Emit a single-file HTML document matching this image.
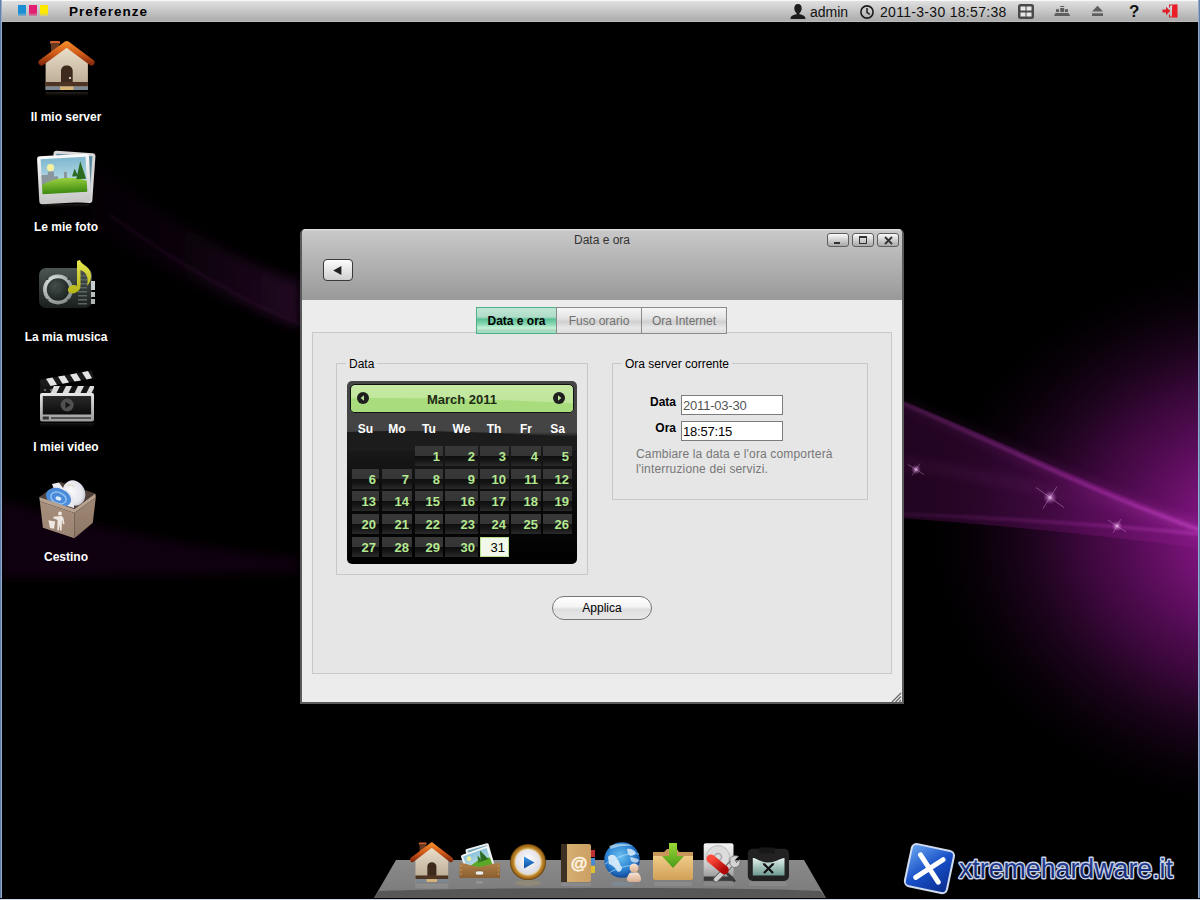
<!DOCTYPE html>
<html><head><meta charset="utf-8">
<style>
*{margin:0;padding:0;box-sizing:border-box}
html,body{width:1200px;height:900px;overflow:hidden;background:#000;font-family:"Liberation Sans",sans-serif}
.abs{position:absolute}
#bg{left:0;top:0;width:1200px;height:900px}
#topbar{left:0;top:0;width:1200px;height:22px;background:linear-gradient(#f8f8f8 0,#f8f8f8 1px,#e0e0e0 1px,#acacac 21px,#bcbcbc 21px,#bcbcbc 22px)}
.lbl{color:#fff;font-weight:bold;font-size:12px;text-align:center;width:132px;left:0}
#win{left:300px;top:229px;width:604px;height:475px;background:#ececec;border:2px solid #5a5a5a;border-top:none;border-radius:5px 5px 0 0}
#whead{background:linear-gradient(#dcdcdc 0,#dcdcdc 1px,#c8c8c8 2px,#999 71px);border-radius:5px 5px 0 0}
.tbtn{top:4px;width:22px;height:14px;border:1px solid #5e5e5e;border-radius:3px;background:linear-gradient(#fafafa,#d8d8d8 40%,#a8a8a8)}
.tab{top:307px;height:27px;border:1px solid #8a8a8a;font-size:12px;text-align:center;line-height:27px;color:#707070;background:linear-gradient(#f6f6f6 0,#e4e4e4 40%,#d0d0d0 55%,#e8e8e8 80%,#dcdcdc 100%)}
.fs{border:1px solid #c8c8c8}
.legend{font-size:12px;color:#000;background:#e6e6e6;padding:0 3px}
.wd{top:422px;font-size:12px;font-weight:bold;color:#fff;text-align:center;line-height:14px}
.cell{height:20px;font-size:13px;font-weight:bold;color:#b4e890;text-align:right;padding-right:3px;line-height:22px;background:linear-gradient(#383838 0,#353535 50%,#0e0e0e 50%,#151515 70%,#2a2a2a 100%)}
.cell.sel{background:#f2f9ea;border:1px solid #b6e08e;color:#000;font-weight:normal;line-height:20px;padding-right:3px}
</style></head><body>
<svg id="bg" class="abs" width="1200" height="900" viewBox="0 0 1200 900">
<defs>
<radialGradient id="g1" cx=".5" cy=".5" r=".5">
<stop offset="0" stop-color="#a020a0" stop-opacity="1"/>
<stop offset=".25" stop-color="#801480" stop-opacity=".95"/>
<stop offset=".55" stop-color="#4e0a4e" stop-opacity=".75"/>
<stop offset=".8" stop-color="#1c041c" stop-opacity=".45"/>
<stop offset="1" stop-color="#000" stop-opacity="0"/>
</radialGradient>
<linearGradient id="st1" x1="900" y1="0" x2="1200" y2="0" gradientUnits="userSpaceOnUse">
<stop offset="0" stop-color="#a040a0" stop-opacity=".25"/>
<stop offset=".6" stop-color="#b030b0" stop-opacity=".6"/>
<stop offset="1" stop-color="#c040c0" stop-opacity=".85"/>
</linearGradient>
<linearGradient id="lg1" x1="0" y1="0" x2="1" y2="0">
<stop offset="0" stop-color="#300830" stop-opacity="0"/>
<stop offset="1" stop-color="#401040" stop-opacity=".8"/>
</linearGradient>
<filter id="b6" filterUnits="userSpaceOnUse" x="0" y="0" width="1200" height="900"><feGaussianBlur stdDeviation="6"/></filter>
<filter id="b2" filterUnits="userSpaceOnUse" x="0" y="0" width="1200" height="900"><feGaussianBlur stdDeviation="1.5"/></filter>
<filter id="b2s" x="-50%" y="-50%" width="200%" height="200%"><feGaussianBlur stdDeviation=".6"/></filter>
<filter id="b20" filterUnits="userSpaceOnUse" x="0" y="0" width="1200" height="900"><feGaussianBlur stdDeviation="20"/></filter>
</defs>
<rect width="1200" height="900" fill="#000"/>
<ellipse cx="1285" cy="535" rx="370" ry="290" fill="url(#g1)"/>
<linearGradient id="bandg" x1="900" y1="0" x2="1200" y2="0" gradientUnits="userSpaceOnUse"><stop offset="0" stop-color="#5a0c5a" stop-opacity=".6"/><stop offset=".5" stop-color="#6a106a" stop-opacity=".65"/><stop offset="1" stop-color="#8a1a8a" stop-opacity=".8"/></linearGradient>
<path d="M900 400 C1000 440 1100 490 1200 525 L1200 548 C1100 535 1000 525 900 518Z" fill="url(#bandg)" opacity=".6"/>
<path d="M900 462 C1000 478 1100 500 1200 528" stroke="#a040a0" stroke-width="6" fill="none" opacity=".18" filter="url(#b6)"/>
<path d="M900 402 C1000 445 1100 495 1200 530" stroke="url(#st1)" stroke-width="10" fill="none" opacity=".35" filter="url(#b6)"/>
<path d="M900 402 C1000 445 1100 495 1200 530" stroke="url(#st1)" stroke-width="3" fill="none" filter="url(#b2)"/>
<path d="M900 514 C1000 518 1100 524 1200 534" stroke="url(#st1)" stroke-width="2.5" fill="none" filter="url(#b2)" opacity=".7"/>
<linearGradient id="lgl" x1="40" y1="0" x2="300" y2="0" gradientUnits="userSpaceOnUse"><stop offset="0" stop-color="#300830" stop-opacity="0"/><stop offset=".5" stop-color="#300a30" stop-opacity=".5"/><stop offset="1" stop-color="#601a60" stop-opacity=".9"/></linearGradient>
<path d="M40 120 C120 190 220 255 300 282 L300 328 C220 300 130 250 40 200Z" fill="url(#lgl)" opacity=".4" filter="url(#b6)"/>
<path d="M110 215 C180 265 240 300 300 324" stroke="#702070" stroke-width="2" fill="none" opacity=".22" filter="url(#b2)"/>
<path d="M0 500 C100 530 200 550 300 558 L300 572 C200 574 100 576 0 578Z" fill="#1e041e" opacity=".55" filter="url(#b6)"/>
<g>
<radialGradient id="spk" cx=".5" cy=".5" r=".5"><stop offset="0" stop-color="#ffd8ff" stop-opacity=".95"/><stop offset=".35" stop-color="#e0a0e0" stop-opacity=".5"/><stop offset="1" stop-color="#c060c0" stop-opacity="0"/></radialGradient>
<g transform="translate(916 469.5)"><circle r="5" fill="url(#spk)"/><path d="M-8 -5L8 5M-4 6L4 -6" stroke="#f0c0f0" stroke-width=".7" opacity=".45"/></g>
<g transform="translate(1050 497.5)"><circle r="7" fill="url(#spk)"/><path d="M-14 -10L14 10M-7 11L7 -11" stroke="#f0c0f0" stroke-width=".8" opacity=".45"/></g>
<g transform="translate(1117 526)"><circle r="5.5" fill="url(#spk)"/><path d="M-9 -6L9 6M-4 7L4 -7" stroke="#f0c0f0" stroke-width=".7" opacity=".45"/></g>
</g>
</svg>

<div id="topbar" class="abs"></div>
<div class="abs" style="left:0;top:0;width:2px;height:900px;background:linear-gradient(90deg,#4d6890,#a9c3e6)"></div>
<div class="abs" style="left:1198px;top:0;width:2px;height:900px;background:linear-gradient(90deg,#a9c3e6,#4d6890)"></div>
<div class="abs" style="left:0;top:899px;width:1200px;height:1px;background:#cfd8e6"></div>
<div class="abs" style="left:18px;top:5px;width:8px;height:11px;background:linear-gradient(#1a8fd6 0,#1a8fd6 70%,rgba(26,143,214,.3) 100%)"></div>
<div class="abs" style="left:29px;top:5px;width:8px;height:11px;background:linear-gradient(#e21f72 0,#e21f72 70%,rgba(226,31,114,.3) 100%)"></div>
<div class="abs" style="left:40px;top:5px;width:8px;height:11px;background:linear-gradient(#fde800 0,#fde800 70%,rgba(253,232,0,.3) 100%)"></div>
<div class="abs" style="left:69px;top:4px;font-size:13.5px;font-weight:bold;letter-spacing:1px;line-height:16px;color:#000">Preferenze</div>
<svg class="abs" style="left:790px;top:4px" width="16" height="15" viewBox="0 0 16 15"><path d="M8 0C5.5 0 4.3 1.8 4.3 4.2C4.3 6.5 5.5 8.4 6.6 9.2L6.6 10.2C3.2 10.8 0.5 12 0.5 15H15.5C15.5 12 12.8 10.8 9.4 10.2V9.2C10.5 8.4 11.7 6.5 11.7 4.2C11.7 1.8 10.5 0 8 0Z" fill="#1c1c1c"/></svg>
<div class="abs" style="left:810px;top:4px;font-size:14px;line-height:16px;color:#111">admin</div>
<svg class="abs" style="left:860px;top:5px" width="14" height="14" viewBox="0 0 14 14"><circle cx="7" cy="7" r="6.1" fill="none" stroke="#1c1c1c" stroke-width="1.6"/><path d="M7 3V7.3L9.8 9.5" fill="none" stroke="#1c1c1c" stroke-width="1.5"/></svg>
<div class="abs" style="left:880px;top:4px;font-size:14px;line-height:16px;color:#111;letter-spacing:.3px">2011-3-30 18:57:38</div>
<svg class="abs" style="left:1018px;top:4px" width="16" height="15" viewBox="0 0 16 15"><rect x="0" y="0" width="16" height="15" rx="2.5" fill="#4a4a4a"/><rect x="2.5" y="2.5" width="5" height="4" fill="#e8e8e8"/><rect x="8.5" y="2.5" width="5" height="4" fill="#e8e8e8"/><rect x="2.5" y="8.5" width="5" height="4" fill="#e8e8e8"/><rect x="8.5" y="8.5" width="5" height="4" fill="#e8e8e8"/></svg>
<svg class="abs" style="left:1053px;top:5px" width="18" height="12" viewBox="0 0 18 12"><rect x="7.2" y="1" width="4" height="1" fill="#5e5e5e"/><rect x="7.2" y="3" width="4" height="4" fill="#5e5e5e"/><rect x="3" y="4.2" width="3" height="2.8" fill="#5e5e5e"/><rect x="12" y="4.2" width="3" height="2.8" fill="#5e5e5e"/><path d="M2.5 8H15.5L17.2 11H1Z" fill="#5e5e5e"/></svg>
<svg class="abs" style="left:1091px;top:5px" width="13" height="12" viewBox="0 0 13 12"><path d="M6.5 0.7L12 6.6H1Z" fill="#5e5e5e"/><rect x="1" y="8.3" width="11" height="2.7" fill="#5e5e5e"/></svg>
<div class="abs" style="left:1129px;top:2px;font-size:17px;font-weight:bold;line-height:20px;color:#111">?</div>
<svg class="abs" style="left:1162px;top:4px" width="16" height="14" viewBox="0 0 16 14"><path d="M7 0.5H15.5V13.5H7V10.5H8V12.5H10L10.5 1.5H8V3.5H7Z" fill="#d9202a"/><path d="M10.5 1.5L15 0.5V13.5L10 12.5Z" fill="#ee1c25"/><path d="M0.5 5.5H4V2.8L8.3 7L4 11.2V8.5H0.5Z" fill="#e01e28"/></svg>



<svg class="abs" style="left:36px;top:38px" width="62" height="62" viewBox="0 0 62 62">
<defs>
<linearGradient id="hroof" gradientUnits="userSpaceOnUse" x1="0" y1="3" x2="0" y2="28"><stop offset="0" stop-color="#f8902e"/><stop offset=".5" stop-color="#d05a18"/><stop offset="1" stop-color="#7a220a"/></linearGradient>
<linearGradient id="hbody" x1="0" y1="0" x2="0" y2="1"><stop offset="0" stop-color="#efe4d0"/><stop offset="1" stop-color="#b4a48c"/></linearGradient>
<linearGradient id="hrefl" x1="0" y1="0" x2="0" y2="1"><stop offset="0" stop-color="#3a3028" stop-opacity=".7"/><stop offset="1" stop-color="#000" stop-opacity="0"/></linearGradient>
</defs>
<rect x="14" y="3" width="10" height="3" rx="1" fill="#d0602a"/>
<rect x="15" y="5" width="8" height="9" fill="#6a3a20"/>
<path d="M9.6 22 L30.7 6 L51.9 22 L51.9 52 L9.6 52Z" fill="url(#hbody)"/>
<path d="M5.5 24.5 L30.7 6 L55.5 24.5" stroke="url(#hroof)" stroke-width="6" stroke-linecap="round" stroke-linejoin="round" fill="none"/>
<path d="M25 48V33C25 29.5 27.5 27.5 30.8 27.5C34 27.5 36.7 29.5 36.7 33V48Z" fill="#3e2a1c"/>
<circle cx="34" cy="40" r="1" fill="#fff"/>
<rect x="9.6" y="44" width="42.3" height="4.5" fill="#4e3422"/>
<rect x="9.6" y="48.5" width="42.3" height="3.5" rx="1" fill="#7c8894"/>
<rect x="24" y="48.5" width="13.5" height="3.5" fill="#d8b478"/>
<rect x="9.6" y="54" width="42.3" height="6" fill="url(#hrefl)"/>
</svg>

<svg class="abs" style="left:34px;top:146px" width="64" height="64" viewBox="0 0 64 64">
<defs>
<linearGradient id="pfr" x1="0" y1="0" x2="0" y2="1"><stop offset="0" stop-color="#fafafa"/><stop offset="1" stop-color="#c6c6c6"/></linearGradient>
<linearGradient id="psky" x1="0" y1="0" x2="0" y2="1"><stop offset="0" stop-color="#7fb8d0"/><stop offset="1" stop-color="#d4ecf0"/></linearGradient>
<linearGradient id="pgr" x1="0" y1="0" x2="0" y2="1"><stop offset="0" stop-color="#9ad040"/><stop offset="1" stop-color="#3e8a10"/></linearGradient>
</defs>
<g transform="rotate(4 40 30)"><rect x="18" y="6" width="42" height="50" rx="3" fill="#d8d8d8"/><rect x="21" y="9" width="36" height="38" fill="#5a8aa0"/></g>
<g transform="rotate(-3 30 30)">
<rect x="4" y="9" width="52" height="48" rx="3" fill="url(#pfr)"/>
<rect x="7.5" y="12" width="45" height="35" fill="url(#psky)"/>
<circle cx="17" cy="21" r="3.6" fill="#f4f0a0"/>
<path d="M7.5 28H14V25H20V30H24V34H30V26H33V36L7.5 40Z" fill="#8a969c"/>
<path d="M7.5 47V38C18 32 36 29 52.5 36V47Z" fill="url(#pgr)"/>
<path d="M47 16L52 34H42Z" fill="#2c6a20"/>
<path d="M41 23L44 31H38Z" fill="#2c6a20"/>
</g>
<rect x="9" y="58" width="46" height="5" fill="url(#hrefl)" opacity=".8"/>
</svg>

<svg class="abs" style="left:36px;top:256px" width="62" height="62" viewBox="0 0 62 62">
<defs>
<linearGradient id="mbody" x1="0" y1="0" x2="0" y2="1"><stop offset="0" stop-color="#4c5652"/><stop offset="1" stop-color="#1a1f1d"/></linearGradient>
<radialGradient id="mspk" cx=".4" cy=".35" r=".7"><stop offset="0" stop-color="#44504c"/><stop offset="1" stop-color="#1a201e"/></radialGradient>
<linearGradient id="mnote" x1="0" y1="0" x2="0" y2="1"><stop offset="0" stop-color="#e8e850"/><stop offset="1" stop-color="#b4b418"/></linearGradient>
</defs>
<rect x="3" y="12" width="53" height="40" rx="7" fill="url(#mbody)"/>
<radialGradient id="mring" cx=".35" cy=".3" r=".8"><stop offset="0" stop-color="#e8eeee"/><stop offset="1" stop-color="#7a8482"/></radialGradient><circle cx="22" cy="33.5" r="15" fill="url(#mring)"/>
<circle cx="22" cy="33.5" r="11.2" fill="url(#mspk)"/><circle cx="11.5" cy="23" r="1" fill="#333"/><circle cx="32.5" cy="23" r="1" fill="#333"/><circle cx="11.5" cy="44" r="1" fill="#333"/><circle cx="32.5" cy="44" r="1" fill="#333"/>
<circle cx="22" cy="33.5" r="3" fill="#38423e"/>
<g fill="#5a6662"><rect x="42" y="19" width="9" height="1.5"/><rect x="42" y="23" width="9" height="1.5"/><rect x="42" y="27" width="9" height="1.5"/><rect x="42" y="31" width="9" height="1.5"/><rect x="42" y="35" width="9" height="1.5"/><rect x="42" y="39" width="9" height="1.5"/><rect x="42" y="43" width="9" height="1.5"/><rect x="42" y="47" width="9" height="1.5"/></g>
<rect x="55" y="25" width="4" height="9" fill="#c8d0ce"/><rect x="55" y="36" width="4" height="5" fill="#b8c0be"/><rect x="55" y="43" width="4" height="5" fill="#b0b8b6"/>
<path d="M41 5L41 30C38.5 28 33 29 32 33C31 37 36 38.5 40 36.5C43 35 44.5 33 44.5 29.5V14C50 16 53 21 51 30C56 25 57 16 51 11C47 8 45 7 44 4Z" fill="url(#mnote)"/>
</svg>

<svg class="abs" style="left:36px;top:366px" width="62" height="64" viewBox="0 0 62 64">
<defs>
<linearGradient id="vfr" x1="0" y1="0" x2="0" y2="1"><stop offset="0" stop-color="#e8e8e8"/><stop offset="1" stop-color="#9a9a9a"/></linearGradient>
<linearGradient id="vscr" x1="0" y1="0" x2="0" y2="1"><stop offset="0" stop-color="#2a2a2a"/><stop offset="1" stop-color="#0c0c0c"/></linearGradient>
</defs>
<path d="M3.5 14L56 4.5L57.5 12L5 21.5Z" fill="#1a1a1a"/>
<g fill="#e4e4e4"><path d="M10 12.8L16.5 11.6L21 18.8L14.5 20Z"/><path d="M22 10.6L28.5 9.4L33 16.6L26.5 17.8Z"/><path d="M34 8.4L40.5 7.2L45 14.4L38.5 15.6Z"/><path d="M46 6.2L52 5L56 12.2L50.5 13.4Z"/></g>
<rect x="4" y="20" width="54" height="8" fill="#141414"/>
<g fill="#dcdcdc"><path d="M18 20H24L20 28H14Z"/><path d="M30 20H36L32 28H26Z"/><path d="M42 20H48L44 28H38Z"/><path d="M54 20H58V22L55 28H50Z"/></g>
<circle cx="9" cy="24" r="1.2" fill="#666"/><circle cx="15" cy="24" r="1.2" fill="#666"/>
<rect x="4" y="27" width="54" height="28.5" rx="2" fill="url(#vfr)"/>
<rect x="6.8" y="30" width="48.3" height="18.5" fill="url(#vscr)"/>
<circle cx="31.2" cy="39" r="6.5" fill="#505050"/>
<path d="M29.5 35.8L34.5 39L29.5 42.2Z" fill="#151515"/>
<rect x="6.8" y="50.5" width="6" height="3" fill="#333"/>
<rect x="15" y="51" width="40" height="2" fill="#555"/>
<rect x="4" y="57" width="54" height="6" fill="url(#hrefl)" opacity=".7"/>
</svg>

<svg class="abs" style="left:36px;top:478px" width="62" height="64" viewBox="0 0 62 64">
<defs>
<linearGradient id="tleft" x1="0" y1="0" x2="0" y2="1"><stop offset="0" stop-color="#a68e7c"/><stop offset="1" stop-color="#9c8472"/></linearGradient>
<linearGradient id="tright" x1="0" y1="0" x2="0" y2="1"><stop offset="0" stop-color="#a08876"/><stop offset="1" stop-color="#8e7664"/></linearGradient>
<radialGradient id="tcd" cx=".4" cy=".4" r=".7"><stop offset="0" stop-color="#fafafa"/><stop offset=".7" stop-color="#e4e4ec"/><stop offset="1" stop-color="#b8b8c8"/></radialGradient>
<radialGradient id="tblue" cx=".5" cy=".55" r=".6"><stop offset="0" stop-color="#b8d8f4"/><stop offset=".35" stop-color="#5a9ae0"/><stop offset="1" stop-color="#3a7ad0"/></radialGradient>
</defs>
<path d="M3.3 19.1L24.3 4L59.3 15.5L38.4 31Z" fill="#4e4038"/>
<ellipse cx="38" cy="15" rx="11" ry="13" transform="rotate(-25 38 15)" fill="url(#tcd)"/><path d="M31 8C34 6 37 7 38 9" stroke="#d8c8a0" stroke-width="1.2" fill="none" opacity=".6"/>
<path d="M16 6L23 4.5L30 14L20 16Z" fill="#eeeef2"/>
<path d="M24 12C30 10 36 14 38 22L38 30L28 27Z" fill="#e8e8f0"/>
<ellipse cx="22.5" cy="19.5" rx="13" ry="9" transform="rotate(22 22.5 19.5)" fill="#4a8ad8"/><ellipse cx="22.5" cy="20" rx="8" ry="5.5" transform="rotate(22 22.5 20)" fill="none" stroke="#8ec0f0" stroke-width="1.6"/><ellipse cx="22.5" cy="20.5" rx="3" ry="2" transform="rotate(22 22.5 20.5)" fill="#d8ecfc"/>
<path d="M3.3 19.1L38.4 31L59.3 15.5L59.8 19.5L38.4 35L3.8 23.2Z" fill="#b6a08e"/>
<path d="M3.8 23.2L38.4 35L38.4 60.3L6.9 49.8Z" fill="url(#tleft)"/>
<path d="M38.4 35L59.8 19.5L56.8 44.8L38.4 60.3Z" fill="url(#tright)"/>
<g fill="#efe8e2"><circle cx="24" cy="35.5" r="1.9"/><path d="M22.3 38.2L25.5 38L27.3 39.5L28.5 46L27 46.3L26 41.5L25.6 52.5L24 52.5L23.6 46.5L22.8 52.5L21.3 52.2L21.6 42L17 40L17.5 38.8Z"/><path d="M12.4 42.2L19.2 43.5L18 50.8L14 50Z"/></g>
</svg>
<div class="abs lbl" style="top:110px">Il mio server</div>
<div class="abs lbl" style="top:220px">Le mie foto</div>
<div class="abs lbl" style="top:330px">La mia musica</div>
<div class="abs lbl" style="top:440px">I miei video</div>
<div class="abs lbl" style="top:550px">Cestino</div>


<div id="win" class="abs"></div>
<div id="whead" class="abs" style="left:302px;top:229px;width:600px;height:71px"></div>
<div class="abs" style="left:302px;top:233px;width:600px;text-align:center;font-size:12px;line-height:14px;color:#333">Data e ora</div>
<div class="abs tbtn" style="left:827px;top:233px"><div class="abs" style="left:6px;top:8px;width:6px;height:2px;background:#333"></div></div>
<div class="abs tbtn" style="left:852px;top:233px"><div class="abs" style="left:6px;top:2px;width:8px;height:8px;border:1px solid #333;border-top-width:2px"></div></div>
<div class="abs tbtn" style="left:877px;top:233px"><svg class="abs" style="left:6px;top:2px" width="9" height="9" viewBox="0 0 9 9"><path d="M1 1L8 8M8 1L1 8" stroke="#333" stroke-width="1.8"/></svg></div>
<div class="abs" style="left:323px;top:259px;width:30px;height:22px;border:1px solid #3a3a3a;border-radius:4px;background:linear-gradient(#fdfdfd,#cfcfcf)"><svg class="abs" style="left:8.5px;top:6px" width="9" height="9" viewBox="0 0 9 9"><path d="M0.2 4.5L8.4 0V9Z" fill="#222"/></svg></div>

<div class="abs" style="left:312px;top:332px;width:580px;height:342px;border:1px solid #c9c9c9;background:#e6e6e6"></div>
<div class="abs tab" style="left:476px;width:81px;border-color:#4caf88;color:#000;font-weight:bold;background:linear-gradient(#bfe6d4 0,#b0dcc8 35%,#5cc196 45%,#8ad8b4 65%,#c6f2d6 80%,#a8d8c0 90%,#9ee0c0 100%)">Data e ora</div>
<div class="abs tab" style="left:556px;width:86px">Fuso orario</div>
<div class="abs tab" style="left:641px;width:86px">Ora Internet</div>

<div class="abs fs" style="left:336px;top:363px;width:252px;height:212px"></div>
<div class="abs legend" style="left:346px;top:357px;line-height:14px">Data</div>
<div class="abs fs" style="left:612px;top:363px;width:256px;height:137px"></div>
<div class="abs legend" style="left:622px;top:357px;line-height:14px">Ora server corrente</div>

<div class="abs" style="left:600px;top:395px;width:76px;text-align:right;font-size:12px;font-weight:bold;line-height:14px">Data</div>
<div class="abs" style="left:600px;top:421px;width:76px;text-align:right;font-size:12px;font-weight:bold;line-height:14px">Ora</div>
<div class="abs" style="left:681px;top:395px;width:102px;height:20px;border:1px solid #7c7c7c;background:#fff;font-size:13px;line-height:19px;padding-left:1px;color:#555;letter-spacing:-.2px">2011-03-30</div>
<div class="abs" style="left:681px;top:421px;width:102px;height:20px;border:1px solid #7c7c7c;background:#fff;font-size:13px;line-height:19px;padding-left:1px;color:#000;letter-spacing:-.2px">18:57:15</div>
<div class="abs" style="left:636px;top:447px;width:240px;font-size:12px;line-height:15px;color:#777;letter-spacing:.16px">Cambiare la data e l'ora comporterà<br>l'interruzione dei servizi.</div>

<div class="abs" style="left:347px;top:381px;width:230px;height:183px;border-radius:5px;background:linear-gradient(#454545 0,#444 51px,#1c1c1c 56px,#0a0a0a 120px,#000 183px);overflow:hidden"></div>
<svg class="abs" style="left:347px;top:381px" width="230" height="70" viewBox="0 0 230 70"><path d="M0 51 C60 49 120 50 230 56 L230 70 L0 70Z" fill="#1c1c1c"/></svg>
<div class="abs" style="left:350px;top:384px;width:224px;height:29px;border:1px solid #111;border-radius:5px;background:linear-gradient(#c6e9a4 0,#bbe495 100%);overflow:hidden"><svg class="abs" style="left:0;top:0" width="222" height="27" viewBox="0 0 222 27"><path d="M0 13C60 12.5 150 14 222 18.5V27H0Z" fill="#a8dc7c"/></svg></div>
<div class="abs" style="left:350px;top:392px;width:224px;text-align:center;font-size:13px;font-weight:bold;line-height:15px;color:#1e2a16">March 2011</div>
<svg class="abs" style="left:357px;top:392px" width="12" height="12" viewBox="0 0 12 12"><circle cx="6" cy="6" r="6" fill="#1e1e1e"/><path d="M3.6 6L7 3.3V8.7Z" fill="#b8e294"/></svg>
<svg class="abs" style="left:553px;top:392px" width="12" height="12" viewBox="0 0 12 12"><circle cx="6" cy="6" r="6" fill="#1e1e1e"/><path d="M8.4 6L5 3.3V8.7Z" fill="#b8e294"/></svg>
<div class="abs wd" style="left:352px;width:27px">Su</div>
<div class="abs wd" style="left:382px;width:30px">Mo</div>
<div class="abs wd" style="left:415px;width:28px">Tu</div>
<div class="abs wd" style="left:445px;width:33px">We</div>
<div class="abs wd" style="left:480px;width:28px">Th</div>
<div class="abs wd" style="left:511px;width:30px">Fr</div>
<div class="abs wd" style="left:543px;width:29px">Sa</div>
<div class="abs cell" style="left:415px;top:446px;width:28px">1</div>
<div class="abs cell" style="left:445px;top:446px;width:33px">2</div>
<div class="abs cell" style="left:480px;top:446px;width:29px">3</div>
<div class="abs cell" style="left:511px;top:446px;width:30px">4</div>
<div class="abs cell" style="left:543px;top:446px;width:29px">5</div>
<div class="abs cell" style="left:352px;top:469px;width:27px">6</div>
<div class="abs cell" style="left:382px;top:469px;width:30px">7</div>
<div class="abs cell" style="left:415px;top:469px;width:28px">8</div>
<div class="abs cell" style="left:445px;top:469px;width:33px">9</div>
<div class="abs cell" style="left:480px;top:469px;width:29px">10</div>
<div class="abs cell" style="left:511px;top:469px;width:30px">11</div>
<div class="abs cell" style="left:543px;top:469px;width:29px">12</div>
<div class="abs cell" style="left:352px;top:491px;width:27px">13</div>
<div class="abs cell" style="left:382px;top:491px;width:30px">14</div>
<div class="abs cell" style="left:415px;top:491px;width:28px">15</div>
<div class="abs cell" style="left:445px;top:491px;width:33px">16</div>
<div class="abs cell" style="left:480px;top:491px;width:29px">17</div>
<div class="abs cell" style="left:511px;top:491px;width:30px">18</div>
<div class="abs cell" style="left:543px;top:491px;width:29px">19</div>
<div class="abs cell" style="left:352px;top:514px;width:27px">20</div>
<div class="abs cell" style="left:382px;top:514px;width:30px">21</div>
<div class="abs cell" style="left:415px;top:514px;width:28px">22</div>
<div class="abs cell" style="left:445px;top:514px;width:33px">23</div>
<div class="abs cell" style="left:480px;top:514px;width:29px">24</div>
<div class="abs cell" style="left:511px;top:514px;width:30px">25</div>
<div class="abs cell" style="left:543px;top:514px;width:29px">26</div>
<div class="abs cell" style="left:352px;top:537px;width:27px">27</div>
<div class="abs cell" style="left:382px;top:537px;width:30px">28</div>
<div class="abs cell" style="left:415px;top:537px;width:28px">29</div>
<div class="abs cell" style="left:445px;top:537px;width:33px">30</div>
<div class="abs cell sel" style="left:480px;top:537px;width:29px">31</div>
<div class="abs" style="left:552px;top:596px;width:100px;height:24px;border:1px solid #777;border-radius:12px;background:linear-gradient(#ffffff 0,#f4f4f4 45%,#dedede 55%,#e8e8e8 100%);font-size:12px;line-height:22px;text-align:center;color:#000">Applica</div>
<svg class="abs" style="left:889px;top:690px" width="13" height="13" viewBox="0 0 13 13"><path d="M3 12L12 3M6.5 12L12 6.5M10 12L12 10" stroke="#666" stroke-width="1.2"/></svg>



<svg class="abs" style="left:370px;top:855px" width="460" height="45" viewBox="370 855 460 45">
<defs>
<linearGradient id="dtop" x1="0" y1="0" x2="0" y2="1"><stop offset="0" stop-color="#8a8a8a"/><stop offset="1" stop-color="#7a7a7a"/></linearGradient>
</defs>
<path d="M396 860H804L826 898H374Z" fill="url(#dtop)"/>
<path d="M379 891C480 888 700 886 820 891L826 898H374Z" fill="#575757"/>
</svg>
<div class="abs" style="left:0;top:898px;width:1200px;height:1px;background:#000"></div>

<!-- dock icons -->
<svg class="abs" style="left:408px;top:840px" width="48" height="50" viewBox="0 0 62 62" preserveAspectRatio="none">
<rect x="14" y="3" width="10" height="3" rx="1" fill="#d0602a"/>
<rect x="15" y="5" width="8" height="9" fill="#6a3a20"/>
<path d="M9.6 22 L30.7 6 L51.9 22 L51.9 52 L9.6 52Z" fill="url(#hbody)"/>
<path d="M5.5 24.5 L30.7 6 L55.5 24.5" stroke="url(#hroof)" stroke-width="6" stroke-linecap="round" stroke-linejoin="round" fill="none"/>
<path d="M25 48V33C25 29.5 27.5 27.5 30.8 27.5C34 27.5 36.7 29.5 36.7 33V48Z" fill="#3e2a1c"/>
<rect x="9.6" y="44" width="42.3" height="4.5" fill="#4e3422"/>
<rect x="9.6" y="48.5" width="42.3" height="3.5" rx="1" fill="#7c8894"/>
<rect x="24" y="48.5" width="13.5" height="3.5" fill="#d8b478"/>
<rect x="9.6" y="54" width="42.3" height="6" fill="#9a9a9a" opacity=".5"/>
</svg>

<svg class="abs" style="left:455px;top:840px" width="50" height="50" viewBox="0 0 50 50">
<defs><linearGradient id="dtray" x1="0" y1="0" x2="0" y2="1"><stop offset="0" stop-color="#b08048"/><stop offset="1" stop-color="#8a5e30"/></linearGradient>
<linearGradient id="dpsky" x1="0" y1="0" x2="0" y2="1"><stop offset="0" stop-color="#8cc4dc"/><stop offset="1" stop-color="#d0e8e8"/></linearGradient></defs>
<g transform="rotate(-16 24 18)"><rect x="13" y="6" width="24" height="19" rx="1.5" fill="#e8eeee"/><rect x="15" y="8" width="20" height="14" fill="#6aa0b8"/></g>
<g transform="rotate(-20 22 20)"><rect x="8" y="10" width="29" height="23" rx="2" fill="#f0f4f4"/><rect x="10" y="12" width="25" height="19" fill="url(#dpsky)"/><path d="M10 31V25C17 21 26 20 35 22V31Z" fill="#5aa828"/><path d="M28 12L33 23H25Z" fill="#2a6a20"/><path d="M24 16L27 23H22Z" fill="#3a7a28"/><circle cx="15" cy="16" r="2.2" fill="#f0ec90"/></g>
<path d="M4.5 23C10 22.5 16 26 24 27C32 26 38 22.5 45 23L45 38H4.5Z" fill="url(#dtray)"/>
<g fill="#c89a60"><circle cx="6" cy="26" r=".8"/><circle cx="6" cy="30" r=".8"/><circle cx="6" cy="34" r=".8"/><circle cx="43.5" cy="26" r=".8"/><circle cx="43.5" cy="30" r=".8"/><circle cx="43.5" cy="34" r=".8"/></g>
<rect x="20.5" y="31" width="8" height="4" rx="1.5" fill="#f0eeea" stroke="#6a4a28" stroke-width=".6"/>
<rect x="21" y="41" width="7" height="3" fill="#b0b0b0" opacity=".35"/>
</svg>

<svg class="abs" style="left:508px;top:842px" width="40" height="44" viewBox="0 0 40 44">
<defs><radialGradient id="dgold" cx=".5" cy=".5" r=".5"><stop offset=".68" stop-color="#f4e2b8"/><stop offset=".8" stop-color="#c08a30"/><stop offset=".92" stop-color="#a06818"/><stop offset="1" stop-color="#5a3808"/></radialGradient>
<radialGradient id="dwhite" cx=".5" cy=".4" r=".6"><stop offset="0" stop-color="#fff"/><stop offset="1" stop-color="#d8d8e0"/></radialGradient></defs>
<circle cx="20" cy="20" r="18" fill="url(#dgold)"/>
<circle cx="20" cy="20" r="12.5" fill="url(#dwhite)"/>
<linearGradient id="dtri" x1="0" y1="0" x2="0" y2="1"><stop offset="0" stop-color="#3a9ae8"/><stop offset="1" stop-color="#0a4aa0"/></linearGradient><path d="M16 14.5L26.5 20.5L16 26.5Z" fill="url(#dtri)"/>
<ellipse cx="20" cy="41" rx="13" ry="3" fill="#a09070" opacity=".5"/>
</svg>

<svg class="abs" style="left:558px;top:842px" width="40" height="44" viewBox="0 0 40 44">
<defs><linearGradient id="dbook" x1="0" y1="0" x2="1" y2="0"><stop offset="0" stop-color="#d8b274"/><stop offset="1" stop-color="#ccA064"/></linearGradient></defs>
<rect x="3" y="2" width="30" height="38" rx="2" fill="url(#dbook)"/>
<rect x="3" y="2" width="6" height="38" fill="#3e3024"/>
<rect x="33" y="8" width="4" height="7" fill="#c03030"/><rect x="33" y="16" width="4" height="7" fill="#4a8ad0"/><rect x="33" y="24" width="4" height="7" fill="#e0c030"/>
<text x="21" y="27" font-family="Liberation Sans" font-size="17" font-weight="bold" fill="#fff4e0" stroke="#fff4e0" stroke-width=".5" text-anchor="middle">@</text>
<rect x="3" y="41" width="30" height="3" fill="#9a9a9a" opacity=".4"/>
</svg>

<svg class="abs" style="left:603px;top:840px" width="44" height="48" viewBox="0 0 44 48">
<defs><radialGradient id="dglobe" cx=".45" cy=".4" r=".65"><stop offset="0" stop-color="#6ac0f0"/><stop offset=".6" stop-color="#2a80d0"/><stop offset="1" stop-color="#0c3a88"/></radialGradient>
<linearGradient id="dperson" x1="0" y1="0" x2="0" y2="1"><stop offset="0" stop-color="#f8e4d4"/><stop offset="1" stop-color="#d8ac8c"/></linearGradient></defs>
<circle cx="19" cy="20" r="17.8" fill="url(#dglobe)"/>
<path d="M5 17C8 13 13 15 14 19C17 21 16 25 19 27C19 31 16 33 14 31C12 27 9 25 6 24Z" fill="#e8f4fc" opacity=".85"/>
<path d="M24 9C28 8 31 10 33 13C31 16 27 17 25 14Z" fill="#e8f4fc" opacity=".8"/>
<path d="M27 17C31 18 34 18 36 20C35 24 31 23 28 21Z" fill="#e8f4fc" opacity=".7"/>
<path d="M2 24C10 20 22 12 36 14M6 33C14 28 26 24 36 26" stroke="#bfe6ff" stroke-width=".8" fill="none" opacity=".8"/>
<path d="M6 6C14 3 24 3 30 6C24 5 14 6 8 9Z" fill="#fff" opacity=".5"/>
<circle cx="31" cy="28" r="4.5" fill="url(#dperson)"/>
<path d="M28 32.5H34C36 33 38 36 38 39.5C38 41 37 42 35 42H27C25 42 24 41 24 39.5C24 36 26 33 28 32.5Z" fill="url(#dperson)"/>
<ellipse cx="19" cy="44" rx="12" ry="2.5" fill="#7a9ab8" opacity=".3"/>
</svg>

<svg class="abs" style="left:650px;top:840px" width="46" height="46" viewBox="0 0 46 46">
<defs><linearGradient id="dfold" x1="0" y1="0" x2="0" y2="1"><stop offset="0" stop-color="#f0cc88"/><stop offset="1" stop-color="#d0a058"/></linearGradient>
<linearGradient id="darrow" x1="0" y1="0" x2="0" y2="1"><stop offset="0" stop-color="#9ad838"/><stop offset="1" stop-color="#4a9a18"/></linearGradient></defs>
<path d="M3 12H14L17 9H27L29 12H43V39H3Z" fill="#c8985a"/>
<path d="M3 16H43V38C43 39 42 40 41 40H5C4 40 3 39 3 38Z" fill="url(#dfold)"/>
<path d="M19 3H27V16H34L23 28L12 16H19Z" fill="url(#darrow)"/>
<rect x="4" y="42" width="38" height="4" fill="#9a9a9a" opacity=".4"/>
</svg>

<svg class="abs" style="left:701px;top:842px" width="42" height="46" viewBox="0 0 42 46">
<defs><linearGradient id="dhdd" x1="0" y1="0" x2="0" y2="1"><stop offset="0" stop-color="#f4f4f4"/><stop offset=".6" stop-color="#c8c8c8"/><stop offset="1" stop-color="#8a8a8a"/></linearGradient>
<linearGradient id="dred" x1="0" y1="0" x2="1" y2="1"><stop offset="0" stop-color="#ff4a3a"/><stop offset="1" stop-color="#b00808"/></linearGradient></defs>
<rect x="2.7" y="1.3" width="29.8" height="37.6" rx="2" fill="url(#dhdd)"/>
<circle cx="17" cy="15" r="11.5" fill="#dcdcdc" stroke="#bcbcbc" stroke-width="1"/>
<circle cx="17" cy="15" r="3.5" fill="none" stroke="#a8a8a8" stroke-width="1.5"/>
<rect x="2.7" y="34.5" width="29.8" height="4.4" fill="#3a3a3a"/>
<path d="M22 27L34 39.5" stroke="#3a3a3a" stroke-width="2.6"/>
<path d="M15 37.5L31 21" stroke="#5a5a5a" stroke-width="6" stroke-linecap="round"/>
<path d="M15 37.5L31 21" stroke="#d0d0d0" stroke-width="4" stroke-linecap="round"/>
<path d="M29 16.5C31 13.5 35 13 37.5 14.5L34 18L35.5 20.5L38.5 17.5C40 21 38 25 34 25.5C32 26 30 24 29 22Z" fill="#d4d4d4" stroke="#6a6a6a" stroke-width=".8"/>
<path d="M10 16.9L23.3 27.9" stroke="url(#dred)" stroke-width="9" stroke-linecap="round"/>
<rect x="3" y="40" width="30" height="4" fill="#9a9a9a" opacity=".35"/>
</svg>

<svg class="abs" style="left:745px;top:846px" width="46" height="40" viewBox="0 0 46 40">
<defs><linearGradient id="dscr" x1="0" y1="0" x2="0" y2="1"><stop offset="0" stop-color="#e4f2ee"/><stop offset="1" stop-color="#6e9a90"/></linearGradient></defs>
<rect x="2.8" y="2.8" width="41.2" height="32.2" rx="5" fill="#222"/>
<rect x="14" y="1.5" width="16" height="6" rx="1.5" fill="#181818"/>
<path d="M7.8 12C12 12 14 16 23.4 16.5C33 16 35 12 39.5 12V29.4H7.8Z" fill="url(#dscr)"/>
<g stroke="#8ab0a8" stroke-width=".4" opacity=".6"><path d="M16 14V29M24 16V29M32 14V29M8 22H39.5"/></g>
<path d="M19 18L28 27M28 18L19 27" stroke="#111" stroke-width="2.2"/>
<path d="M17.5 17L20.5 18L19 20ZM29.5 17L26.5 18L28 20Z" fill="#111"/>
<rect x="4" y="36" width="38" height="4" fill="#9a9a9a" opacity=".35"/>
</svg>

<svg class="abs" style="left:900px;top:840px" width="280" height="58" viewBox="0 0 280 58">
<defs><linearGradient id="xbox" x1="0" y1="0" x2="1" y2="1"><stop offset="0" stop-color="#6aa8f0"/><stop offset=".5" stop-color="#1850c8"/><stop offset="1" stop-color="#0a2a8a"/></linearGradient>
<linearGradient id="xtxt" x1="0" y1="0" x2="0" y2="1"><stop offset="0" stop-color="#2a4aa8"/><stop offset="1" stop-color="#0c1c60"/></linearGradient></defs>
<g transform="rotate(12 29 28)"><rect x="8" y="7" width="43" height="43" rx="5" fill="url(#xbox)" stroke="#d0dcf0" stroke-width="2"/>
<path d="M18 17L41 40M41 17L18 40" stroke="#fff" stroke-width="5" stroke-linecap="round"/></g>
<text x="59" y="37.5" font-family="Liberation Sans" font-size="27" textLength="214" lengthAdjust="spacingAndGlyphs" fill="url(#xtxt)" stroke="#c8d2e6" stroke-width="2.8" paint-order="stroke" stroke-linejoin="round">xtremehardware.it</text>
</svg>
</body></html>
